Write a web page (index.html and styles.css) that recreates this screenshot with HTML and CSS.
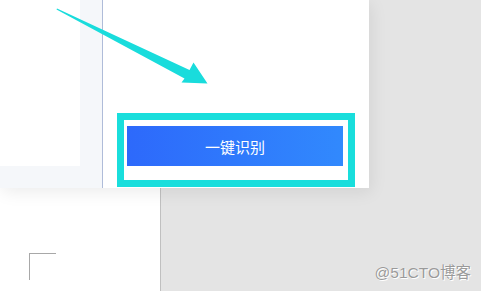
FILE: index.html
```html
<!DOCTYPE html>
<html lang="zh">
<head>
<meta charset="utf-8">
<link rel="stylesheet" href="styles.css">
</head>
<body>
<div class="screen">
  <div class="card">
    <div class="sidebar">
      <div class="thumb"></div>
    </div>
    <div class="main">
      <div class="frame">
        <button class="btn">一键识别</button>
      </div>
    </div>
    <svg class="arrow" width="369" height="188" viewBox="0 0 369 188">
      <polygon points="57,8.5 189.5,70 193.5,62.5 207.5,83.5 181.5,82.5 184.5,78.5 56.5,9.5" fill="#19dcdc"/>
    </svg>
  </div>
  <div class="lower">
    <div class="page">
      <div class="corner"></div>
    </div>
    <div class="desk">
      <span class="mark">@51CTO博客</span>
    </div>
  </div>
</div>
</body>
</html>
```
FILE: styles.css
```css
html, body {
  margin: 0;
  padding: 0;
}
body {
  width: 481px;
  height: 291px;
  overflow: hidden;
  background: #e4e4e4;
}
.screen {
  display: flex;
  flex-direction: column;
  width: 481px;
  height: 291px;
}
.card {
  position: relative;
  z-index: 2;
  display: flex;
  width: 369px;
  height: 188px;
  flex: none;
  background: #fff;
  box-shadow: 2px 4px 16px rgba(0, 0, 0, 0.08);
}
.sidebar {
  width: 102px;
  background: #f5f7fa;
  border-right: 1px solid #afbcd9;
}
.thumb {
  width: 80px;
  height: 166px;
  background: #fff;
}
.main {
  flex: 1;
  padding: 113px 0 0 14px;
}
.frame {
  width: 220px;
  height: 50px;
  border: 7px solid #19dedc;
  background: #fff;
  padding: 6px 1px 4px 3px;
  box-sizing: content-box;
}
.btn {
  display: flex;
  align-items: center;
  justify-content: center;
  width: 216px;
  height: 40px;
  margin: 0;
  padding: 0;
  border: none;
  background: linear-gradient(90deg, #2d69fb 0%, #3189fd 100%);
  color: #fff;
  font-family: "Noto Sans CJK SC", "Noto Sans", sans-serif;
  font-size: 15px;
  line-height: 1;
}
.arrow {
  position: absolute;
  left: 0;
  top: 0;
}
.lower {
  flex: 1;
  display: flex;
}
.page {
  width: 161px;
  background: #fff;
  border-right: 1px solid #c0c0c0;
  padding: 65px 0 0 29px;
  box-sizing: border-box;
}
.corner {
  width: 26px;
  height: 26px;
  border-top: 1px solid #a8a8a8;
  border-left: 1px solid #a8a8a8;
}
.desk {
  flex: 1;
  display: flex;
  justify-content: flex-end;
  align-items: flex-end;
  padding: 0 10px 9px 0;
}
.mark {
  font-family: "Liberation Sans", "Noto Sans CJK SC", sans-serif;
  font-size: 15.5px;
  line-height: 18px;
  color: #9a9a9a;
  text-shadow: 0 0 1px #fff, 1px 1px 0 #fff;
}
```
